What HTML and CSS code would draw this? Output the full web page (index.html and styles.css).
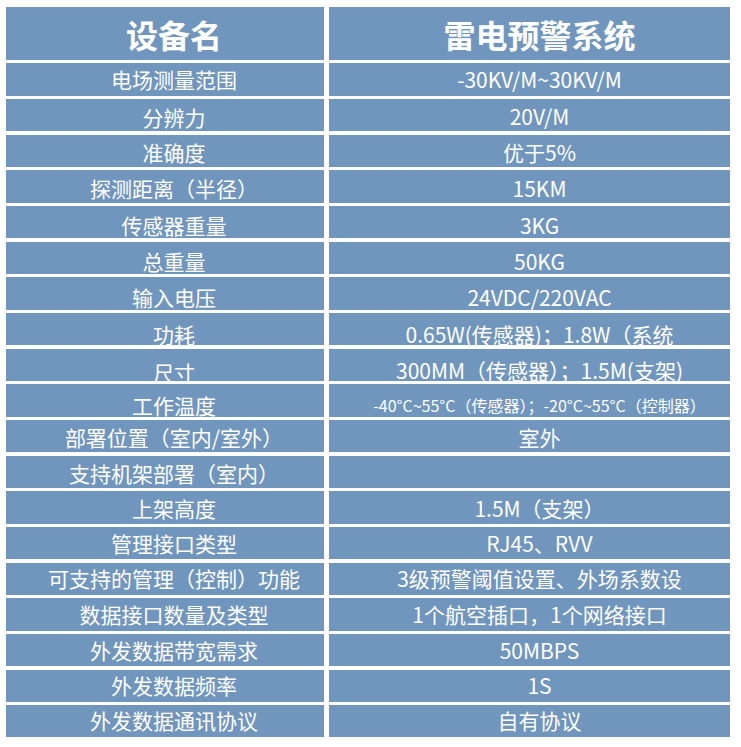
FILE: index.html
```html
<!DOCTYPE html>
<html lang="zh-CN">
<head>
<meta charset="utf-8">
<title>雷电预警系统</title>
<link rel="stylesheet" href="styles.css">
</head>
<body>
<div class="spec">
  <div class="cell key head">设备名</div><div class="cell val head">雷电预警系统</div>
  <div class="cell key">电场测量范围</div><div class="cell val">-30KV/M~30KV/M</div>
  <div class="cell key dy2">分辨力</div><div class="cell val dy1">20V/M</div>
  <div class="cell key dy2">准确度</div><div class="cell val dy2">优于5%</div>
  <div class="cell key dy2">探测距离（半径）</div><div class="cell val dy2">15KM</div>
  <div class="cell key dy3">传感器重量</div><div class="cell val dy3">3KG</div>
  <div class="cell key dy4">总重量</div><div class="cell val dy4">50KG</div>
  <div class="cell key dy4">输入电压</div><div class="cell val dy4">24VDC/220VAC</div>
  <div class="cell key dy5">功耗</div><div class="cell val dy5">0.65W(传感器)；1.8W（系统</div>
  <div class="cell key dy7">尺寸</div><div class="cell val dy6">300MM（传感器）；1.5M(支架)</div>
  <div class="cell key dy5">工作温度</div><div class="cell val small dy5">-40°C~55°C（传感器）；-20°C~55°C（控制器）</div>
  <div class="cell key dy1">部署位置（室内/室外）</div><div class="cell val dy1">室外</div>
  <div class="cell key dy2">支持机架部署（室内）</div><div class="cell val"></div>
  <div class="cell key dy1">上架高度</div><div class="cell val dy1">1.5M（支架）</div>
  <div class="cell key">管理接口类型</div><div class="cell val">RJ45、RVV</div>
  <div class="cell key">可支持的管理（控制）功能</div><div class="cell val">3级预警阈值设置、外场系数设</div>
  <div class="cell key">数据接口数量及类型</div><div class="cell val">1个航空插口，1个网络接口</div>
  <div class="cell key">外发数据带宽需求</div><div class="cell val">50MBPS</div>
  <div class="cell key">外发数据频率</div><div class="cell val">1S</div>
  <div class="cell key up1">外发数据通讯协议</div><div class="cell val up1">自有协议</div>
</div>
</body>
</html>
```
FILE: styles.css
```css
html, body {
  margin: 0;
  padding: 0;
  background: #ffffff;
}
body {
  font-family: "Noto Sans CJK SC", "Noto Sans", sans-serif;
  color: #ffffff;
}
.spec {
  display: grid;
  grid-template-columns: 318px 401px;
  grid-template-rows: 53px repeat(19, 32.2px);
  column-gap: 5px;
  row-gap: 3.47px;
  padding: 7px 0 0 6px;
}
.cell {
  background: #7196be;
  display: flex;
  align-items: center;
  justify-content: center;
  white-space: nowrap;
  overflow: hidden;
  font-size: 21px;
  font-weight: 400;
  line-height: 1;
}
.key {
  padding-left: 18px;
}
.val {
  padding-left: 20px;
}
.head {
  font-size: 32px;
  font-weight: 700;
}
.small {
  font-size: 16px;
}
/* baseline drift of the original rows */
.dy1 { padding-top: 2px; }
.dy2 { padding-top: 4px; }
.dy3 { padding-top: 6px; }
.dy4 { padding-top: 8px; }
.dy5 { padding-top: 10px; }
.dy6 { padding-top: 12px; }
.dy7 { padding-top: 15px; }
.up1 { padding-bottom: 2px; }
```
